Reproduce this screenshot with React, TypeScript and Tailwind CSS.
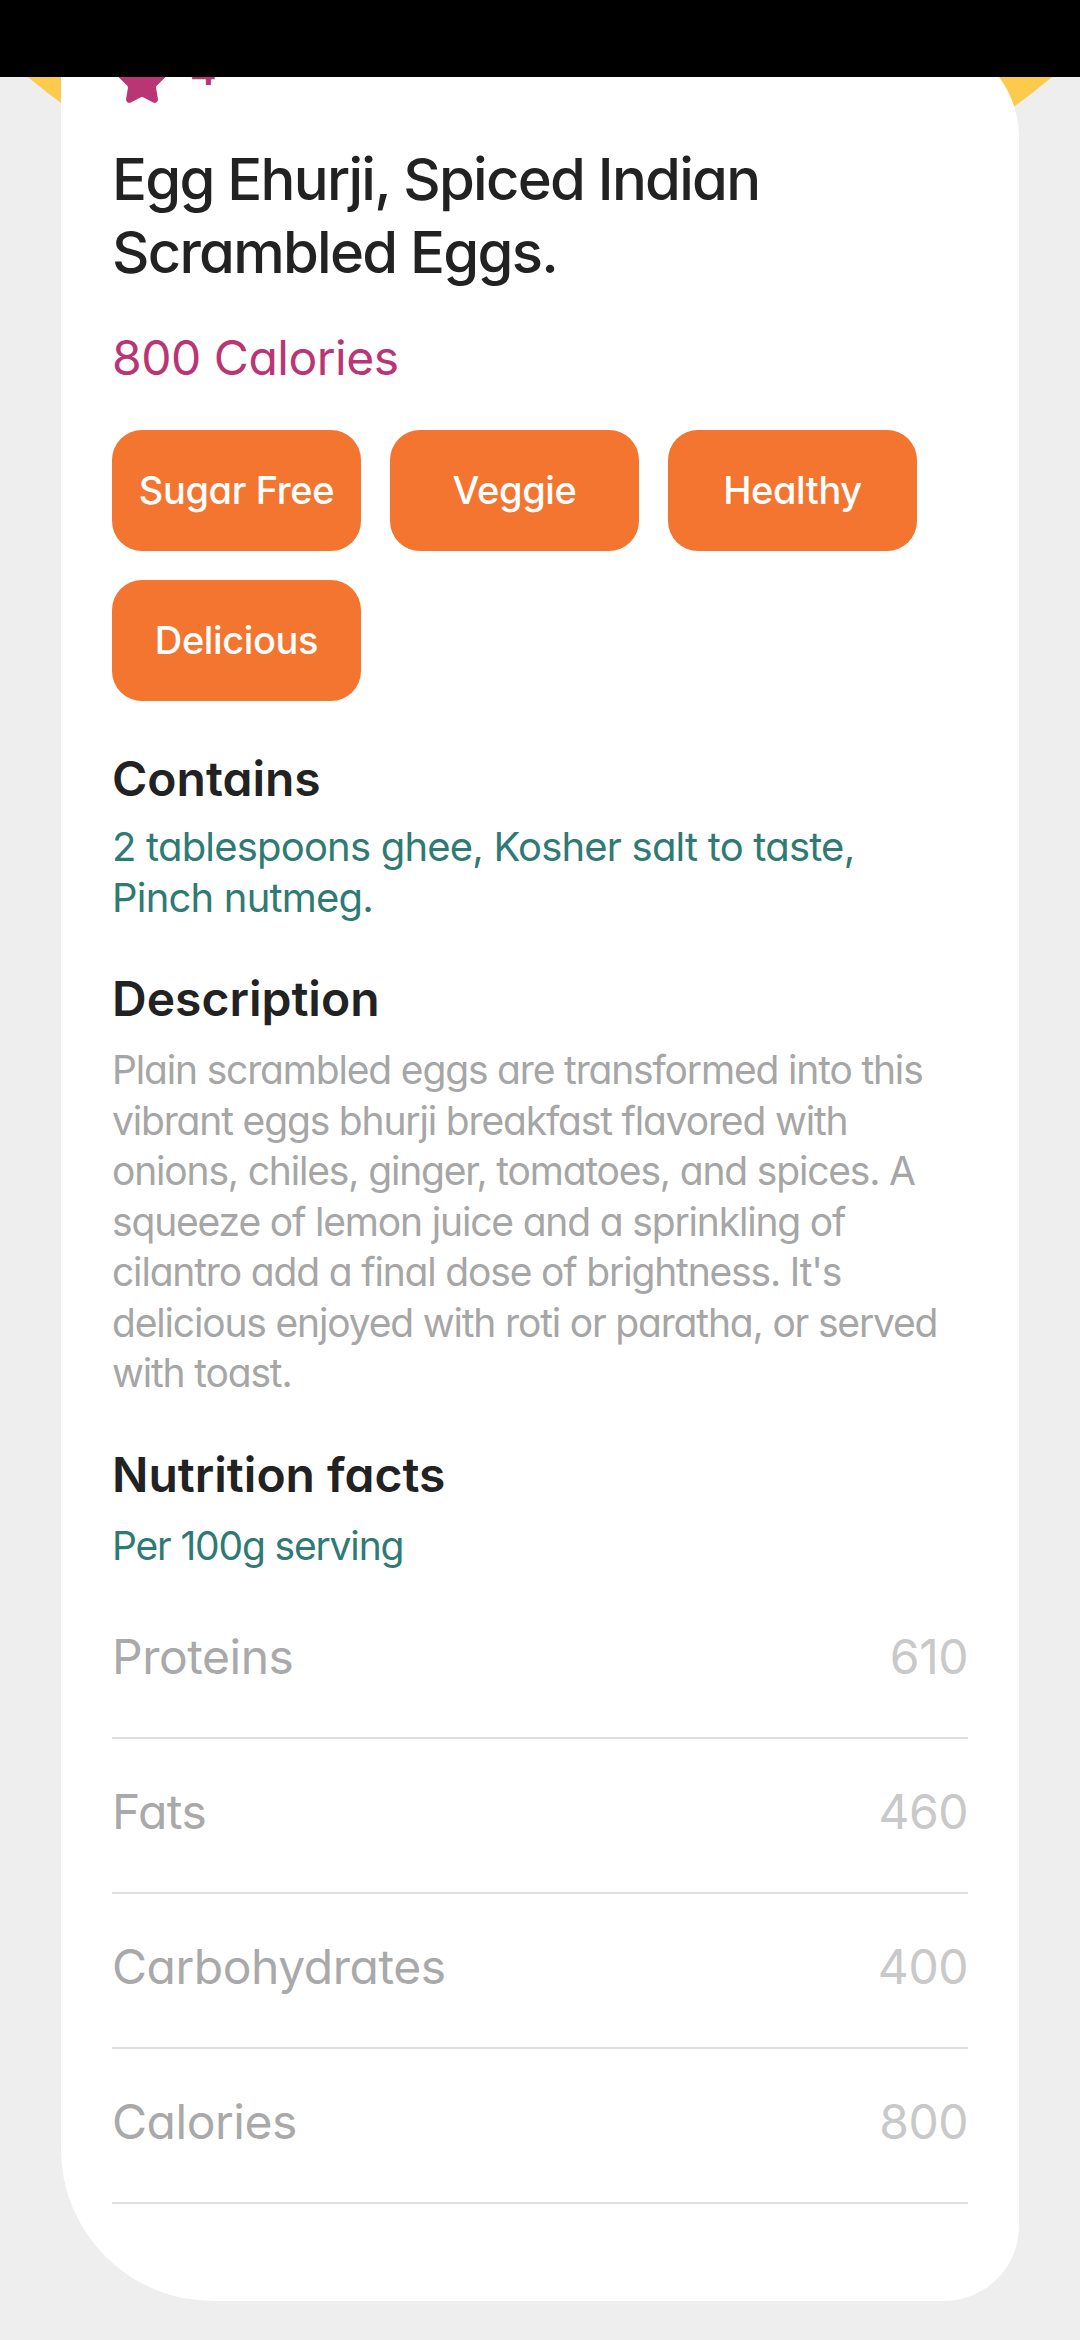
import { Star } from 'lucide-react';

const tags = ['Sugar Free', 'Veggie', 'Healthy', 'Delicious'];

const nutrition = [
  { label: 'Proteins', value: '610' },
  { label: 'Fats', value: '460' },
  { label: 'Carbohydrates', value: '400' },
  { label: 'Calories', value: '800' },
];

export default function App() {
  return (
    <div className="relative h-[2340px] w-[1080px] overflow-hidden bg-[#eeeeee] font-['Inter',_sans-serif] [font-feature-settings:'cv11'] antialiased">
      {/* plate behind the card */}
      <div className="absolute left-[-261px] top-[-1340px] h-[1602px] w-[1602px] rounded-full bg-[#fccb4e]" />

      {/* status bar */}
      <div className="absolute left-0 top-0 z-20 h-[77px] w-full bg-black" />

      <div className="relative z-10 mx-[61px] mt-[37px] rounded-tl-[40px] rounded-tr-[100px] rounded-br-[75px] rounded-bl-[152px] bg-white px-[51px] pb-[97px] pt-[18px]">
        <div className="flex items-start">
          <Star className="ml-[4px] h-[52px] w-[52px] shrink-0 fill-[#b93574] text-[#b93574]" strokeWidth={2} />
          <span className="-mt-[4px] ml-[22px] text-[40px] font-semibold leading-[40px] text-[#b93574]">4</span>
        </div>

        <h1 className="mt-[36px] text-[58px] font-medium leading-[73px] tracking-[-0.03em] text-[#222222]">
          Egg Ehurji, Spiced Indian Scrambled Eggs.
        </h1>

        <p className="mt-[41px] text-[48px] leading-[56px] tracking-[-0.01em] text-[#b93574]">800 Calories</p>

        <div className="mt-[44px] flex flex-wrap gap-[29px]">
          {tags.map((t) => (
            <div
              key={t}
              className="flex h-[121px] w-[249px] items-center justify-center rounded-[30px] bg-[#f47530] text-[38px] font-medium tracking-[-0.01em] text-white"
            >
              {t}
            </div>
          ))}
        </div>

        <h2 className="mt-[50px] text-[48px] font-semibold leading-[56px] text-[#222222]">Contains</h2>
        <p className="mt-[14px] max-w-[800px] text-[40px] leading-[51px] tracking-[-0.02em] text-[#2f7a74]">
          2 tablespoons ghee, Kosher salt to taste, Pinch nutmeg.
        </p>

        <h2 className="mt-[48px] text-[48px] font-semibold leading-[56px] text-[#222222]">Description</h2>
        <p className="mt-[18px] text-[39px] leading-[50.5px] tracking-[-0.03em] text-[#a6a6a6]">
          Plain scrambled eggs are transformed into this vibrant eggs bhurji breakfast flavored with onions, chiles,
          ginger, tomatoes, and spices. A squeeze of lemon juice and a sprinkling of cilantro add a final dose of
          brightness. It's delicious enjoyed with roti or paratha, or served with toast.
        </p>

        <h2 className="mt-[48px] text-[48px] font-semibold leading-[56px] text-[#222222]">Nutrition facts</h2>
        <p className="mt-[18px] text-[39px] leading-[50px] tracking-[-0.03em] text-[#2f7a74]">Per 100g serving</p>

        <div className="mt-[13px]">
          {nutrition.map((n) => (
            <div
              key={n.label}
              className="flex items-center justify-between border-b-2 border-[#dedede] pb-[52px] pt-[45px] text-[48px] leading-[56px] tracking-[-0.01em]"
            >
              <span className="text-[#a9a9a9]">{n.label}</span>
              <span className="text-[#c9c9c9]">{n.value}</span>
            </div>
          ))}
        </div>
      </div>
    </div>
  );
}
